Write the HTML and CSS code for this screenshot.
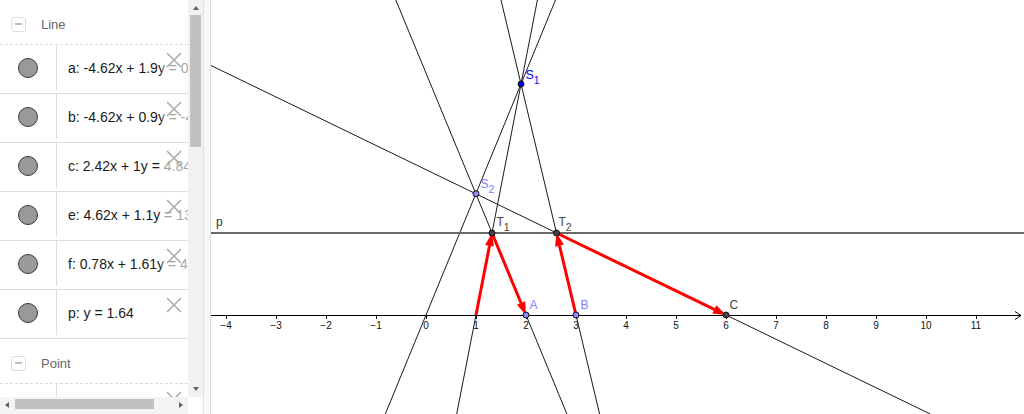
FILE: index.html
```html
<!DOCTYPE html>
<html>
<head>
<meta charset="utf-8">
<link rel="stylesheet" href="styles.css">
</head>
<body>
<div class="app">
  <div class="algebra">
    <div class="list">
      <div class="group-head"><span class="toggle"></span><span class="gname">Line</span></div>
      <div class="row"><div class="vis"><span class="dot"></span></div><div class="expr">a: -4.62x + 1.9y = 0</div><svg class="del" viewBox="0 0 16 16"><path d="M1 1L15 15M15 1L1 15"/></svg></div>
      <div class="row"><div class="vis"><span class="dot"></span></div><div class="expr">b: -4.62x + 0.9y = -4.62</div><svg class="del" viewBox="0 0 16 16"><path d="M1 1L15 15M15 1L1 15"/></svg></div>
      <div class="row"><div class="vis"><span class="dot"></span></div><div class="expr">c: 2.42x + 1y = 4.84</div><svg class="del" viewBox="0 0 16 16"><path d="M1 1L15 15M15 1L1 15"/></svg></div>
      <div class="row"><div class="vis"><span class="dot"></span></div><div class="expr">e: 4.62x + 1.1y = 13.86</div><svg class="del" viewBox="0 0 16 16"><path d="M1 1L15 15M15 1L1 15"/></svg></div>
      <div class="row"><div class="vis"><span class="dot"></span></div><div class="expr">f: 0.78x + 1.61y = 4.68</div><svg class="del" viewBox="0 0 16 16"><path d="M1 1L15 15M15 1L1 15"/></svg></div>
      <div class="row"><div class="vis"><span class="dot"></span></div><div class="expr">p: y = 1.64</div><svg class="del" viewBox="0 0 16 16"><path d="M1 1L15 15M15 1L1 15"/></svg></div>
      <div class="group-head"><span class="toggle"></span><span class="gname">Point</span></div>
      <div class="row"><div class="vis"><span class="dot pt"></span></div><div class="expr">A = (2, 0)</div><svg class="del" viewBox="0 0 16 16"><path d="M1 1L15 15M15 1L1 15"/></svg></div>
    </div>
    <div class="vscroll"><span class="arr up"></span><div class="vthumb"></div><span class="arr down"></span></div>
    <div class="hscroll"><span class="arr left"></span><div class="hthumb"></div><span class="arr right"></span></div>
    <div class="corner"></div>
  </div>
  <div class="splitter"></div>
  <svg class="graphics" viewBox="211 0 813 414" width="813" height="414">
    <g class="geo-lines">
      <line x1="555.5" y1="0" x2="385.3" y2="414"/>
      <line x1="537.4" y1="0" x2="456.7" y2="414"/>
      <line x1="395.8" y1="0" x2="566.9" y2="414"/>
      <line x1="501" y1="0" x2="599.6" y2="414"/>
      <line x1="211" y1="65.5" x2="930.3" y2="414"/>
    </g>
    <line class="line-p" x1="211" y1="233" x2="1024" y2="233"/>
    <g class="axis">
      <line x1="211" y1="315.5" x2="1021" y2="315.5"/>
      <polyline points="1015,311.5 1021,315.5 1015,319.5"/>
      <path d="M226.5 315V319M276.5 315V319M326.5 315V319M376.5 315V319M426.5 315V319M476.5 315V319M526.5 315V319M576.5 315V319M626.5 315V319M676.5 315V319M726.5 315V319M776.5 315V319M826.5 315V319M876.5 315V319M926.5 315V319M976.5 315V319"/>
    </g>
    <g class="ticks">
      <text x="226" y="328.5">−4</text>
      <text x="276" y="328.5">−3</text>
      <text x="326" y="328.5">−2</text>
      <text x="376" y="328.5">−1</text>
      <text x="426" y="328.5">0</text>
      <text x="476" y="328.5">1</text>
      <text x="526" y="328.5">2</text>
      <text x="576" y="328.5">3</text>
      <text x="626" y="328.5">4</text>
      <text x="676" y="328.5">5</text>
      <text x="726" y="328.5">6</text>
      <text x="776" y="328.5">7</text>
      <text x="826" y="328.5">8</text>
      <text x="876" y="328.5">9</text>
      <text x="926" y="328.5">10</text>
      <text x="976" y="328.5">11</text>
    </g>
    <g class="vectors">
      <line x1="476" y1="315" x2="489.5" y2="245.8"/>
      <polygon points="492,233 493.9,246.6 485.1,244.9"/>
      <line x1="492" y1="233" x2="521" y2="303"/>
      <polygon points="526,315 516.9,304.7 525.2,301.3"/>
      <line x1="576" y1="315" x2="559.5" y2="245.6"/>
      <polygon points="556.5,233 563.9,244.6 555.1,246.7"/>
      <line x1="556.5" y1="233" x2="714.3" y2="309.3"/>
      <polygon points="726,315 712.3,313.4 716.3,305.3"/>
    </g>
    <g class="points">
      <circle class="pt-s1" cx="521" cy="84" r="3"/>
      <circle class="pt-light" cx="476" cy="193.7" r="3"/>
      <circle class="pt-dark" cx="492" cy="233" r="3"/>
      <circle class="pt-dark" cx="556.5" cy="233" r="3"/>
      <circle class="pt-light" cx="526" cy="315" r="3"/>
      <circle class="pt-light" cx="576" cy="315" r="3"/>
      <circle class="pt-dark" cx="726" cy="315" r="3"/>
    </g>
    <g class="labels">
      <text class="lbl lbl-s1" x="525.5" y="79">S<tspan class="sub" dy="4.5">1</tspan></text>
      <text class="lbl lbl-light" x="480.5" y="188">S<tspan class="sub" dy="4.5">2</tspan></text>
      <text class="lbl lbl-dark" x="496.5" y="226">T<tspan class="sub" dy="5">1</tspan></text>
      <text class="lbl lbl-dark" x="558.5" y="226">T<tspan class="sub" dy="5">2</tspan></text>
      <text class="lbl lbl-light" x="529.5" y="309">A</text>
      <text class="lbl lbl-light" x="580.5" y="309">B</text>
      <text class="lbl lbl-dark" x="729.5" y="309">C</text>
      <text class="lbl lbl-p" x="216" y="226">p</text>
    </g>
  </svg>
</div>
</body>
</html>
```
FILE: styles.css
```css
body {
  margin: 0;
  background: #fff;
  font-family: "Liberation Sans", Arial, sans-serif;
}
.app {
  display: flex;
  width: 1024px;
  height: 414px;
  overflow: hidden;
}
.algebra {
  flex: none;
  width: 203px;
  display: grid;
  grid-template-columns: 188px 15px;
  grid-template-rows: 397px 17px;
}
.list {
  overflow: hidden;
}
.group-head {
  height: 45px;
  box-sizing: border-box;
  border-bottom: 1px dashed #dcdcdc;
  display: flex;
  align-items: center;
  padding: 4px 0 0 11px;
}
.toggle {
  width: 15px;
  height: 15px;
  box-sizing: border-box;
  border: 1px solid #dedede;
  border-radius: 3px;
  display: flex;
  align-items: center;
  justify-content: center;
}
.toggle::before {
  content: "";
  width: 7px;
  height: 2px;
  background: #bdbdbd;
}
.gname {
  margin-left: 15px;
  font-size: 13px;
  color: #666;
}
.row {
  position: relative;
  height: 49px;
  box-sizing: border-box;
  border-bottom: 1px solid #dedede;
  padding-bottom: 3px;
  display: flex;
}
.vis {
  flex: none;
  width: 56px;
  border-right: 1px solid #dedede;
  display: flex;
  align-items: center;
  justify-content: center;
}
.dot {
  width: 20px;
  height: 20px;
  box-sizing: border-box;
  border-radius: 50%;
  background: #999;
  border: 1px solid #3a3a3a;
}
.dot.pt {
  background: #9999ff;
  border-color: #22229a;
}
.expr {
  padding-left: 11px;
  font-size: 14px;
  color: #1a1a1a;
  white-space: nowrap;
  display: flex;
  align-items: center;
}
.row::after {
  content: "";
  position: absolute;
  left: 160px;
  top: 0;
  bottom: 0;
  width: 40px;
  background: linear-gradient(to right, rgba(255,255,255,0), rgba(255,255,255,0.6) 6px);
}
.del {
  position: absolute;
  z-index: 1;
  left: 166px;
  top: 7px;
  width: 16px;
  height: 16px;
  fill: none;
  stroke: #adadad;
  stroke-width: 1.6;
}
.vscroll {
  background: #f1f1f1;
  display: flex;
  flex-direction: column;
  align-items: center;
}
.arr {
  width: 0;
  height: 0;
  flex: none;
}
.arr.up {
  margin-top: 6px;
  border-left: 3.5px solid transparent;
  border-right: 3.5px solid transparent;
  border-bottom: 4px solid #606060;
}
.arr.down {
  margin-top: auto;
  margin-bottom: 6px;
  border-left: 3.5px solid transparent;
  border-right: 3.5px solid transparent;
  border-top: 4px solid #606060;
}
.vthumb {
  margin-top: 5px;
  width: 11px;
  height: 132px;
  background: #c1c1c1;
}
.hscroll {
  background: #f4f4f4;
  display: flex;
  align-items: flex-start;
}
.arr.left {
  margin: 5px 0 0 5px;
  border-top: 3px solid transparent;
  border-bottom: 3px solid transparent;
  border-right: 4px solid #606060;
}
.arr.right {
  margin: 5px 5px 0 auto;
  border-top: 3px solid transparent;
  border-bottom: 3px solid transparent;
  border-left: 4px solid #606060;
}
.hthumb {
  margin: 2px 0 0 6px;
  width: 139px;
  height: 10px;
  background: #c1c1c1;
}
.corner {
  background: #fff;
}
.splitter {
  flex: none;
  width: 8px;
  box-sizing: border-box;
  border-left: 1px solid #e2e2e2;
  border-right: 1px solid #dadada;
  background: #f8f8f8;
}
.graphics {
  flex: none;
  display: block;
}
.geo-lines line {
  stroke: #1a1a1a;
  stroke-width: 1;
}
.line-p {
  stroke: #6a6a6a;
  stroke-width: 2;
}
.axis line, .axis path, .axis polyline {
  stroke: #000;
  stroke-width: 1;
  fill: none;
}
.ticks text {
  font-family: "Liberation Sans", Arial, sans-serif;
  font-size: 10px;
  fill: #111;
  text-anchor: middle;
}
.vectors line {
  stroke: #ff0000;
  stroke-width: 3;
}
.vectors polygon {
  fill: #ff0000;
}
.points circle {
  stroke: #111;
  stroke-width: 1;
}
.pt-s1 { fill: #0000e0; }
.pt-light { fill: #8c8cff; }
.pt-dark { fill: #444; }
.lbl {
  font-family: "Liberation Sans", Arial, sans-serif;
  font-size: 12px;
}
.lbl .sub {
  font-size: 10.5px;
}
.lbl-s1 { fill: #0000ff; font-size: 12.5px; }
.lbl-light { fill: #7f7fff; }
.lbl-dark { fill: #444; }
.lbl-p { fill: #333; font-size: 12px; }
```
